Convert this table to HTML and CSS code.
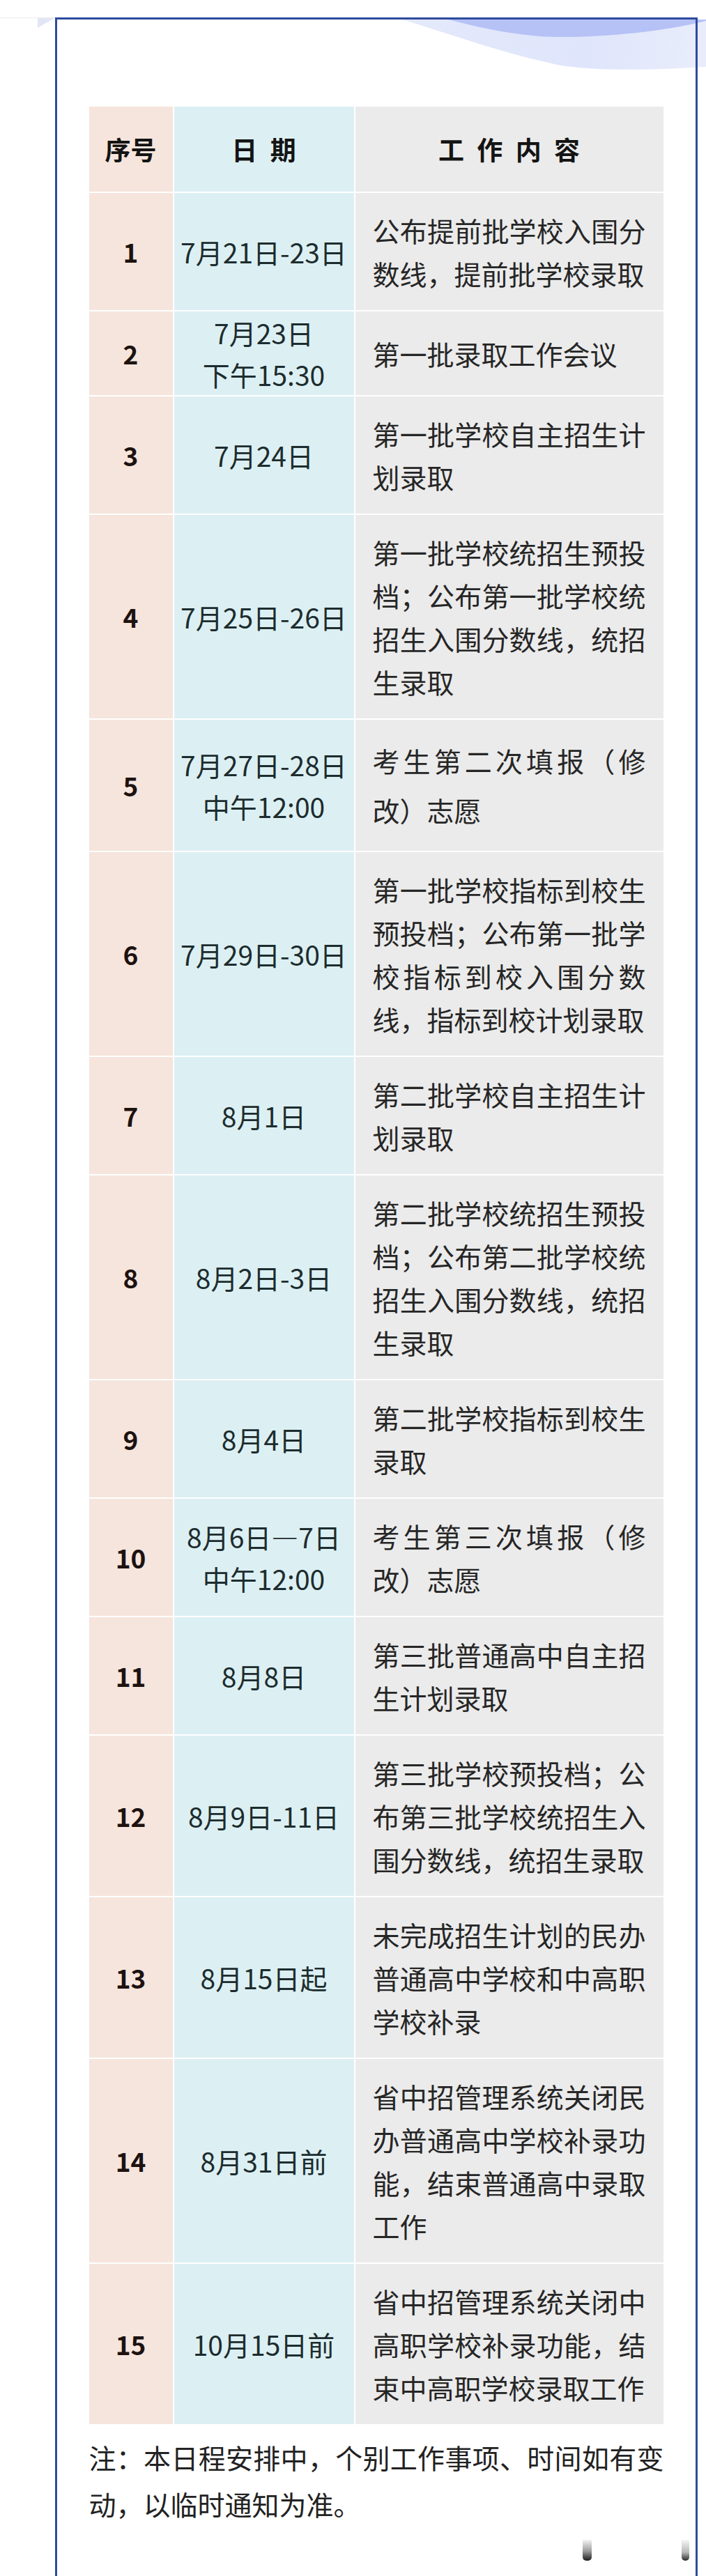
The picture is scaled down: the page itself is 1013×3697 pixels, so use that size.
FILE: index.html
```html
<!DOCTYPE html>
<html lang="zh-CN">
<head>
<meta charset="utf-8">
<title>录取工作日程安排</title>
<link rel="stylesheet" href="styles.css">
</head>
<body>
<svg class="deco" width="1013" height="110" viewBox="0 0 1013 110" aria-hidden="true">
  <defs>
    <linearGradient id="lightwave" x1="0" y1="0" x2="1" y2="0">
      <stop offset="0" stop-color="#e4e9fb"/>
      <stop offset="0.6" stop-color="#dfe5fb"/>
      <stop offset="1" stop-color="#e9edfb"/>
    </linearGradient>
  </defs>
  <line x1="0" y1="25.5" x2="79" y2="25.5" stroke="#efefef" stroke-width="1.5"/>
  <path d="M54 26 L78 26 L54 40 Z" fill="#e2e5f4"/>
  <path d="M577 28 C 650 50, 720 76, 800 93 C 850 102, 930 101, 1013 96 L1013 28 Z" fill="url(#lightwave)"/>
  <path d="M643 28 C 690 40, 740 52, 800 53 C 860 54, 950 46, 1013 30 L1013 28 Z" fill="#b6c2f6"/>
</svg>

<div class="frame">
  <table class="schedule">
    <colgroup>
      <col class="c-no">
      <col class="c-date">
      <col class="c-work">
    </colgroup>
    <thead>
      <tr>
        <th class="no">序号</th>
        <th class="date">日 期</th>
        <th class="work">工 作 内 容</th>
      </tr>
    </thead>
    <tbody>
      <tr>
        <td class="no">1</td>
        <td class="date">7月21日-23日</td>
        <td class="work">公布提前批学校入围分数线，提前批学校录取</td>
      </tr>
      <tr>
        <td class="no">2</td>
        <td class="date">7月23日<br>下午15:30</td>
        <td class="work">第一批录取工作会议</td>
      </tr>
      <tr>
        <td class="no">3</td>
        <td class="date">7月24日</td>
        <td class="work">第一批学校自主招生计划录取</td>
      </tr>
      <tr>
        <td class="no">4</td>
        <td class="date">7月25日-26日</td>
        <td class="work">第一批学校统招生预投档；公布第一批学校统招生入围分数线，统招生录取</td>
      </tr>
      <tr>
        <td class="no">5</td>
        <td class="date">7月27日-28日<br>中午12:00</td>
        <td class="work loose">考生第二次填报（修改）志愿</td>
      </tr>
      <tr>
        <td class="no">6</td>
        <td class="date">7月29日-30日</td>
        <td class="work">第一批学校指标到校生预投档；公布第一批学校指标到校入围分数线，指标到校计划录取</td>
      </tr>
      <tr>
        <td class="no">7</td>
        <td class="date">8月1日</td>
        <td class="work">第二批学校自主招生计划录取</td>
      </tr>
      <tr>
        <td class="no">8</td>
        <td class="date">8月2日-3日</td>
        <td class="work">第二批学校统招生预投档；公布第二批学校统招生入围分数线，统招生录取</td>
      </tr>
      <tr>
        <td class="no">9</td>
        <td class="date">8月4日</td>
        <td class="work">第二批学校指标到校生录取</td>
      </tr>
      <tr>
        <td class="no">10</td>
        <td class="date">8月6日—7日<br>中午12:00</td>
        <td class="work">考生第三次填报（修改）志愿</td>
      </tr>
      <tr>
        <td class="no">11</td>
        <td class="date">8月8日</td>
        <td class="work">第三批普通高中自主招生计划录取</td>
      </tr>
      <tr>
        <td class="no">12</td>
        <td class="date">8月9日-11日</td>
        <td class="work">第三批学校预投档；公布第三批学校统招生入围分数线，统招生录取</td>
      </tr>
      <tr>
        <td class="no">13</td>
        <td class="date">8月15日起</td>
        <td class="work">未完成招生计划的民办普通高中学校和中高职学校补录</td>
      </tr>
      <tr>
        <td class="no">14</td>
        <td class="date">8月31日前</td>
        <td class="work">省中招管理系统关闭民办普通高中学校补录功能，结束普通高中录取工作</td>
      </tr>
      <tr>
        <td class="no">15</td>
        <td class="date">10月15日前</td>
        <td class="work">省中招管理系统关闭中高职学校补录功能，结束中高职学校录取工作</td>
      </tr>
    </tbody>
  </table>

  <p class="note">注：本日程安排中，个别工作事项、时间如有变动，以临时通知为准。</p>

  <div class="bars" aria-hidden="true">
    <span class="bar bar-a"></span>
    <span class="bar bar-b"></span>
  </div>
</div>
</body>
</html>
```

FILE: styles.css
```css
html, body {
  margin: 0;
  padding: 0;
  background: #ffffff;
}

body {
  font-family: "Noto Sans CJK SC", "Noto Sans", sans-serif;
  color: #222222;
}

.deco {
  position: absolute;
  top: 0;
  left: 0;
  display: block;
  z-index: 0;
}

.frame {
  position: relative;
  z-index: 1;
  box-sizing: border-box;
  width: 922px;
  margin: 25px 0 0 79px;
  border: 3.5px solid #2f4b9d;
  border-bottom: none;
  padding: 122.5px 43.5px 22px 43.5px;
}

.schedule {
  table-layout: fixed;
  width: 828px;
  border-collapse: separate;
  border-spacing: 2px;
  font-size: 39px;
}

.c-no { width: 120px; }
.c-date { width: 258px; }
.c-work { width: 442px; }

.schedule th,
.schedule td {
  vertical-align: middle;
  padding: 0;
}

.schedule th {
  height: 122px;
  font-size: 37px;
  font-weight: 700;
  line-height: 60px;
  color: #141414;
  text-align: center;
  word-spacing: 10px;
}

.no {
  background: #f6e5dc;
}

.date {
  background: #dcf0f3;
}

.work {
  background: #ebebeb;
}

td.no {
  text-align: center;
  font-size: 37px;
  font-weight: 700;
  color: #1c1210;
}

td.date {
  text-align: center;
  line-height: 60px;
  color: #1d2c2e;
  white-space: nowrap;
}

td.work {
  padding: 22px 25px;
  line-height: 62px;
  text-align: justify;
  color: #262626;
}

td.work.loose {
  padding: 23px 25px;
  line-height: 71px;
}

.note {
  margin: 12px 2px 0 2px;
  font-size: 39px;
  line-height: 67px;
  text-align: justify;
  color: #222222;
}

.bars {
  display: flex;
  justify-content: flex-end;
  align-items: flex-end;
  gap: 129px;
  margin: 18px -34.5px 0 0;
}

.bar {
  display: block;
  height: 30px;
  border-radius: 1px 1px 5px 5px;
  background: linear-gradient(to bottom, #f4f4f4 0%, #9a9a9a 55%, #1e1e1e 100%);
}

.bar-a { width: 13px; }
.bar-b {
  width: 11px;
  background: linear-gradient(to bottom, #f6f6f6 0%, #b8b8b8 60%, #2a2a2a 100%);
}
```
